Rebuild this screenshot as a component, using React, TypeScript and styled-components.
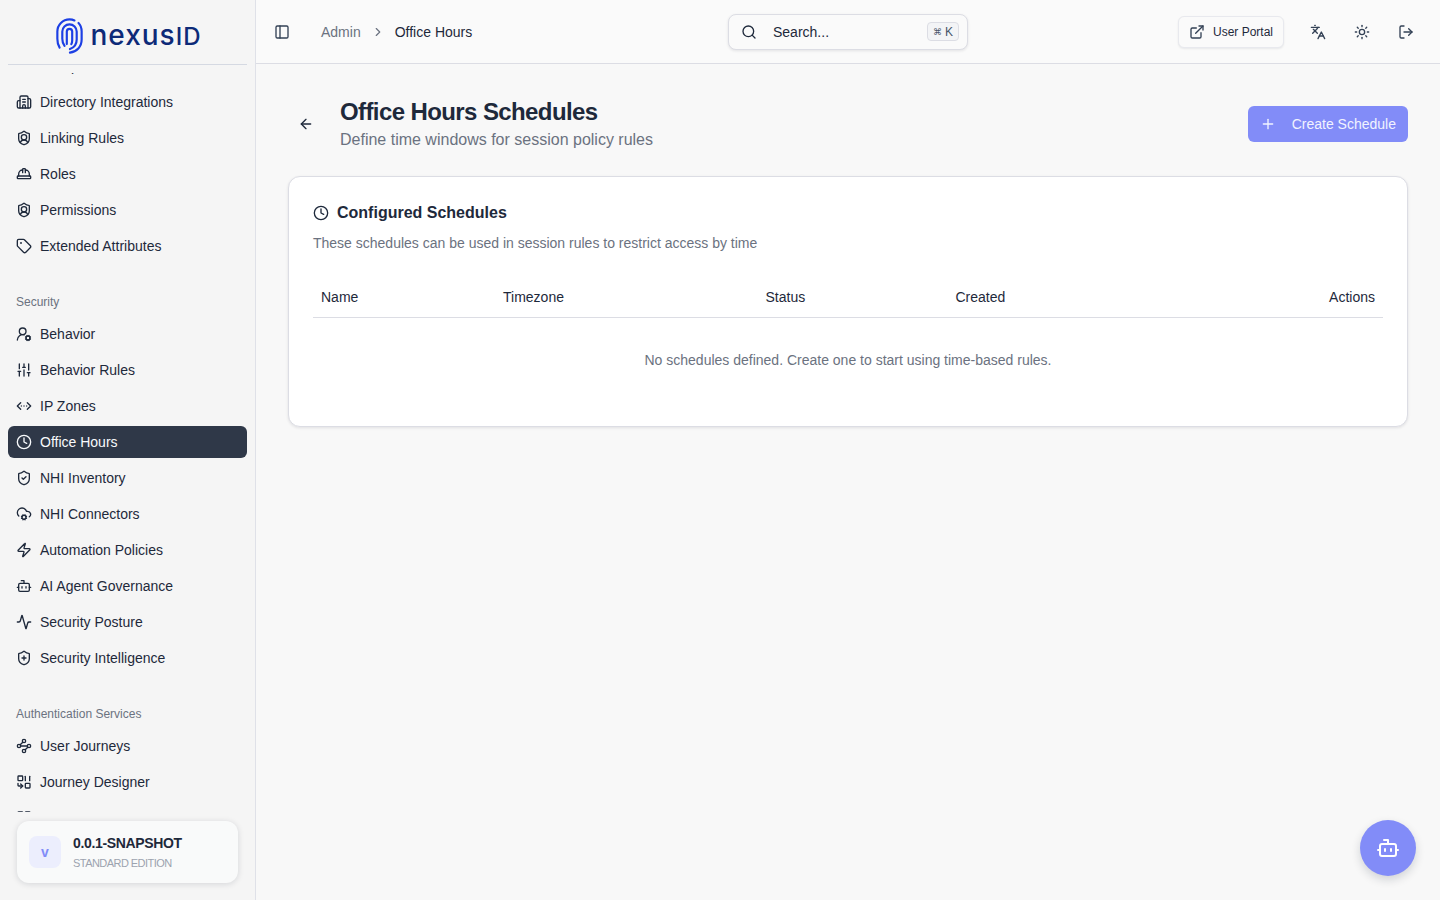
import React from "react";
import styled, {createGlobalStyle} from "styled-components";
import {
  Activity,
  ArrowLeft,
  Bot,
  Building2,
  ChevronRight,
  ChevronsLeftRightEllipsis,
  Clock,
  CloudCog,
  ExternalLink,
  HardHat,
  Languages,
  LayoutDashboard,
  LogOut,
  LucideIcon,
  PanelLeft,
  Plus,
  Search,
  ShieldCheck,
  ShieldPlus,
  ShieldUser,
  SlidersVertical,
  Sun,
  Tag,
  UserRoundCog,
  Users,
  Waypoints,
  Zap,
} from "lucide-react";

// no matching lucide icon for this one
const DesignerIcon = (({size = 16, strokeWidth = 2}: {size?: number; strokeWidth?: number}) => (
  <svg width={size} height={size} viewBox="0 0 24 24" fill="none" stroke="currentColor" strokeWidth={strokeWidth} strokeLinecap="round" strokeLinejoin="round">
    <rect x="3" y="3" width="7" height="7" rx="1" />
    <path d="M14 3.500v6.500" />
    <path d="M20.500 3.500v6.500" />
    <path d="M3 14v3a1 1 0 0 0 1 1h6" />
    <path d="m7 15 3 3-3 3" />
    <rect x="14" y="14" width="7" height="7" rx="1" />
  </svg>
)) as unknown as LucideIcon;

interface INavItem {
  label: string;
  icon: LucideIcon;
  active?: boolean;
}
interface ISection {
  title?: string;
  items: INavItem[];
}

const sections: ISection[] = [
  {
    items: [
      {label: "Groups", icon: Users},
      {label: "Directory Integrations", icon: Building2},
      {label: "Linking Rules", icon: ShieldUser},
      {label: "Roles", icon: HardHat},
      {label: "Permissions", icon: ShieldUser},
      {label: "Extended Attributes", icon: Tag},
    ],
  },
  {
    title: "Security",
    items: [
      {label: "Behavior", icon: UserRoundCog},
      {label: "Behavior Rules", icon: SlidersVertical},
      {label: "IP Zones", icon: ChevronsLeftRightEllipsis},
      {label: "Office Hours", icon: Clock, active: true},
      {label: "NHI Inventory", icon: ShieldCheck},
      {label: "NHI Connectors", icon: CloudCog},
      {label: "Automation Policies", icon: Zap},
      {label: "AI Agent Governance", icon: Bot},
      {label: "Security Posture", icon: Activity},
      {label: "Security Intelligence", icon: ShieldPlus},
    ],
  },
  {
    title: "Authentication Services",
    items: [
      {label: "User Journeys", icon: Waypoints},
      {label: "Journey Designer", icon: DesignerIcon},
      {label: "Flows", icon: LayoutDashboard},
    ],
  },
];

const columns = [
  {label: "Name", width: 182},
  {label: "Timezone", width: 262.5},
  {label: "Status", width: 190},
  {label: "Created", width: 190},
  {label: "Actions", width: 245.5},
];

function App() {
  return (
    <>
      <GlobalStyle />
      <Layout>
        <Sidebar>
          <Brand>
            <svg width="27" height="40" viewBox="0 0 30 40" fill="none" stroke="#1c3fe4" strokeWidth="2.4" strokeLinecap="round">
              <path d="M4 33C2 30 1.500 27 1.500 23V15C1.500 7.500 7.500 1.500 15 1.500c2 0 4 .4 5.500 1.200" />
              <path d="M25 5.500C27.500 8 28.500 11 28.500 15v9C28.500 32 23 37.500 15.500 38.500" />
              <path d="M9.500 31C8 29 7 26 7 23V15C7 10.600 10.600 7 15 7s8 3.600 8 8v9c0 5-3 9-7.500 10.500" />
              <path d="M12 29V15c0-1.700 1.300-3 3-3s3 1.300 3 3v10c0 1.500-.3 3-1 4" />
            </svg>
            <BrandName>
              nexus<BrandCaps>ID</BrandCaps>
            </BrandName>
          </Brand>
          <Nav>
            <NavScroll>
              {sections.map((section, i) => (
                <NavSection key={i}>
                  {section.title && <SectionTitle>{section.title}</SectionTitle>}
                  {section.items.map((item) => (
                    <NavItem key={item.label} $active={item.active}>
                      <item.icon size={16} strokeWidth={2} />
                      {item.label}
                    </NavItem>
                  ))}
                </NavSection>
              ))}
            </NavScroll>
          </Nav>
          <VersionCard>
            <VersionBadge>v</VersionBadge>
            <div>
              <VersionName>0.0.1-SNAPSHOT</VersionName>
              <VersionEdition>STANDARD EDITION</VersionEdition>
            </div>
          </VersionCard>
        </Sidebar>
        <Main>
          <Topbar>
            <TopLeft>
              <IconButton>
                <PanelLeft size={16} />
              </IconButton>
              <Crumbs>
                <CrumbLink>Admin</CrumbLink>
                <ChevronRight size={14} />
                <CrumbCurrent>Office Hours</CrumbCurrent>
              </Crumbs>
            </TopLeft>
            <SearchBox>
              <Search size={16} />
              <SearchText>Search...</SearchText>
              <Kbd>
                <small>⌘</small> K
              </Kbd>
            </SearchBox>
            <TopRight>
              <PortalButton>
                <ExternalLink size={16} />
                User Portal
              </PortalButton>
              <IconButton>
                <Languages size={16} />
              </IconButton>
              <IconButton>
                <Sun size={16} />
              </IconButton>
              <IconButton>
                <LogOut size={16} />
              </IconButton>
            </TopRight>
          </Topbar>
          <Content>
            <PageHeader>
              <BackButton>
                <ArrowLeft size={16} />
              </BackButton>
              <PageTitles>
                <PageTitle>Office Hours Schedules</PageTitle>
                <PageSubtitle>Define time windows for session policy rules</PageSubtitle>
              </PageTitles>
              <CreateButton>
                <Plus size={16} />
                Create Schedule
              </CreateButton>
            </PageHeader>
            <Card>
              <CardTitle>
                <Clock size={16} />
                Configured Schedules
              </CardTitle>
              <CardDescription>These schedules can be used in session rules to restrict access by time</CardDescription>
              <Table>
                <thead>
                  <tr>
                    {columns.map((col) => (
                      <Th key={col.label} style={{width: col.width}}>
                        {col.label}
                      </Th>
                    ))}
                  </tr>
                </thead>
                <tbody>
                  <tr>
                    <EmptyCell colSpan={5}>No schedules defined. Create one to start using time-based rules.</EmptyCell>
                  </tr>
                </tbody>
              </Table>
            </Card>
          </Content>
        </Main>
      </Layout>
      <Fab>
        <Bot size={24} />
      </Fab>
    </>
  );
}

const GlobalStyle = createGlobalStyle`
  * {
    box-sizing: border-box;
  }
  body {
    margin: 0;
    font-family: "Liberation Sans", Arial, sans-serif;
    color: #1e293b;
    background: #f8f8f8;
  }
`;
const Layout = styled.div`
  display: flex;
  height: 900px;
  overflow: hidden;
`;
const Sidebar = styled.aside`
  width: 256px;
  flex-shrink: 0;
  display: flex;
  flex-direction: column;
  background: #f5f5f5;
  border-right: 1px solid #dfe1e8;
`;
const Brand = styled.div`
  height: 65px;
  margin: 0 8px;
  padding: 7px 0 0 3px;
  display: flex;
  align-items: center;
  justify-content: center;
  gap: 7px;
  border-bottom: 1px solid #d5d9e2;
  svg {
    flex-shrink: 0;
  }
`;
const BrandName = styled.span`
  font-family: Inter, sans-serif;
  font-size: 28px;
  font-weight: 500;
  color: #0d2a78;
  letter-spacing: 1px;
  line-height: 32px;
  padding-top: 1px;
`;
const BrandCaps = styled.span`
  font-size: 24px;
`;
const Nav = styled.nav`
  margin-top: 8px;
  height: 739px;
  overflow: hidden;
  padding: 0 8px;
`;
const NavScroll = styled.div`
  margin-top: -23px;
  display: flex;
  flex-direction: column;
  gap: 24px;
`;
const NavSection = styled.div`
  display: flex;
  flex-direction: column;
  gap: 4px;
`;
const SectionTitle = styled.div`
  height: 28px;
  padding: 4px 8px 0;
  display: flex;
  align-items: center;
  font-size: 12px;
  color: #6b7280;
`;
const NavItem = styled.a<{$active?: boolean}>`
  height: 32px;
  padding: 0 8px;
  display: flex;
  align-items: center;
  gap: 8px;
  border-radius: 6px;
  font-size: 14px;
  color: ${(p) => (p.$active ? "#f8fafc" : "#1e293b")};
  background: ${(p) => (p.$active ? "#2f3848" : "transparent")};
  svg {
    flex-shrink: 0;
  }
`;
const VersionCard = styled.div`
  margin: 9px 17px 0;
  height: 62px;
  padding: 0 12px;
  display: flex;
  align-items: center;
  gap: 12px;
  background: #f9fafa;
  border-radius: 12px;
  box-shadow: 0 1px 6px rgba(15, 23, 42, 0.14);
`;
const VersionBadge = styled.div`
  width: 32px;
  height: 32px;
  display: flex;
  align-items: center;
  justify-content: center;
  border-radius: 8px;
  background: #eceefd;
  color: #818cf8;
  font-size: 14px;
  font-weight: 700;
`;
const VersionName = styled.div`
  font-size: 14px;
  line-height: 20px;
  font-weight: 700;
  letter-spacing: -0.35px;
`;
const VersionEdition = styled.div`
  margin-top: 1px;
  font-size: 11px;
  line-height: 18px;
  color: #9ca3af;
  letter-spacing: -0.55px;
`;
const Main = styled.main`
  flex: 1;
  min-width: 0;
  display: flex;
  flex-direction: column;
`;
const Topbar = styled.header`
  height: 64px;
  padding: 0 16px;
  display: grid;
  grid-template-columns: 1fr 240px 1fr;
  align-items: center;
  background: #fafafa;
  border-bottom: 1px solid #dcdde4;
`;
const TopLeft = styled.div`
  display: flex;
  align-items: center;
  gap: 21px;
  margin-left: -8px;
`;
const IconButton = styled.button`
  width: 36px;
  height: 36px;
  padding: 0;
  display: flex;
  align-items: center;
  justify-content: center;
  border: none;
  background: none;
  color: #334155;
`;
const Crumbs = styled.div`
  display: flex;
  align-items: center;
  gap: 10px;
  font-size: 14px;
  svg {
    color: #6b7280;
  }
`;
const CrumbLink = styled.span`
  color: #6b7280;
`;
const CrumbCurrent = styled.span`
  color: #1e293b;
`;
const SearchBox = styled.div`
  width: 240px;
  height: 36px;
  padding: 0 8px 0 12px;
  display: flex;
  align-items: center;
  gap: 16px;
  background: #fafafa;
  border: 1px solid #dcdde4;
  border-radius: 8px;
  box-shadow: 0 1px 3px rgba(15, 23, 42, 0.1);
  font-size: 14px;
`;
const SearchText = styled.span`
  flex: 1;
`;
const Kbd = styled.kbd`
  height: 19px;
  padding: 0 5px;
  display: flex;
  align-items: center;
  gap: 3px;
  border: 1px solid #dcdde4;
  border-radius: 4px;
  background: #f3f4f6;
  font-family: inherit;
  font-size: 12px;
  color: #475569;
  small {
    font-size: 9px;
  }
`;
const TopRight = styled.div`
  display: flex;
  align-items: center;
  justify-content: flex-end;
  gap: 8px;
`;
const PortalButton = styled.button`
  width: 106px;
  height: 32px;
  padding: 0 10px;
  margin-right: 8px;
  display: flex;
  align-items: center;
  gap: 8px;
  white-space: nowrap;
  background: #fafafa;
  border: 1px solid #e8e9ee;
  border-radius: 6px;
  box-shadow: 0 1px 2px rgba(15, 23, 42, 0.08);
  font-family: inherit;
  font-size: 12px;
  color: #1e293b;
  svg {
    flex-shrink: 0;
    color: #334155;
  }
`;
const Content = styled.div`
  flex: 1;
  padding: 32px;
  display: flex;
  flex-direction: column;
  gap: 24px;
`;
const PageHeader = styled.div`
  height: 56px;
  display: flex;
  align-items: center;
`;
const BackButton = styled.button`
  width: 36px;
  height: 36px;
  margin-right: 16px;
  padding: 0;
  display: flex;
  align-items: center;
  justify-content: center;
  border: none;
  background: none;
  color: #1e293b;
`;
const PageTitles = styled.div`
  flex: 1;
`;
const PageTitle = styled.h1`
  margin: 0;
  font-size: 24px;
  line-height: 32px;
  font-weight: 700;
  letter-spacing: -0.6px;
  color: #1e293b;
`;
const PageSubtitle = styled.p`
  margin: 0;
  font-size: 16px;
  line-height: 24px;
  color: #6b7280;
`;
const CreateButton = styled.button`
  width: 160px;
  height: 36px;
  padding: 0 12px;
  display: flex;
  align-items: center;
  justify-content: space-between;
  border: none;
  border-radius: 6px;
  background: #828cf8;
  color: #f1f3ff;
  font-family: inherit;
  font-size: 14px;
  font-weight: 500;
`;
const Card = styled.section`
  height: 251px;
  padding: 24px;
  background: #ffffff;
  border: 1px solid #dcdde4;
  border-radius: 12px;
  box-shadow: 0 1px 3px rgba(15, 23, 42, 0.1);
`;
const CardTitle = styled.h2`
  margin: 0;
  display: flex;
  align-items: center;
  gap: 8px;
  font-size: 16px;
  line-height: 24px;
  font-weight: 700;
  color: #1e293b;
`;
const CardDescription = styled.p`
  margin: 8px 0 0;
  font-size: 14px;
  line-height: 20px;
  color: #6b7280;
`;
const Table = styled.table`
  width: 100%;
  margin-top: 16px;
  border-collapse: collapse;
  table-layout: fixed;
  font-size: 14px;
`;
const Th = styled.th`
  height: 48px;
  padding: 8px 8px 0;
  border-bottom: 1px solid #dcdde4;
  text-align: left;
  font-weight: 400;
  color: #1e293b;
  &:last-child {
    text-align: right;
  }
`;
const EmptyCell = styled.td`
  height: 84px;
  padding-top: 2px;
  text-align: center;
  color: #6b7280;
`;
const Fab = styled.button`
  position: fixed;
  right: 24px;
  bottom: 24px;
  width: 56px;
  height: 56px;
  padding: 0;
  display: flex;
  align-items: center;
  justify-content: center;
  border: none;
  border-radius: 50%;
  background: #828cf8;
  color: #ffffff;
  box-shadow: 0 4px 10px rgba(15, 23, 42, 0.16);
`;
export default App;
